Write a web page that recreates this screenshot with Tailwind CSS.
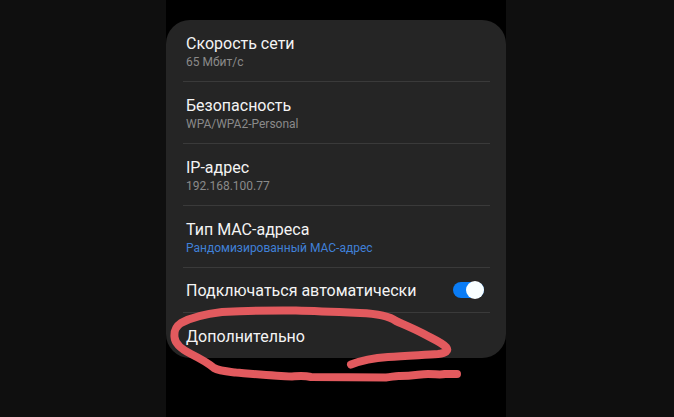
<!DOCTYPE html>
<html lang="ru">
<head>
    <meta charset="UTF-8">
    <meta name="viewport" content="width=device-width, initial-scale=1.0">
    <title>Настройки сети</title>
    <script src="https://cdn.jsdelivr.net/npm/@tailwindcss/browser@4"></script>
</head>
<body class="min-h-screen bg-[#0f0f0f] pr-0.5 font-[Roboto,sans-serif] text-[#f4f4f4]">
    <main class="mx-auto min-h-screen w-full max-w-[340px] bg-black pt-5">
        <div class="relative rounded-[24px] bg-[#252525] pl-[17px] pr-4">
            <dl>
                <div class="h-[62px] border-b border-[#3a3a3a] px-[3px] pt-3">
                    <dt class="text-base leading-6">Скорость сети</dt>
                    <dd class="text-xs leading-3 text-[#8a8a8a]">65 Мбит/с</dd>
                </div>
                <div class="h-[62px] border-b border-[#3a3a3a] px-[3px] pt-3">
                    <dt class="text-base leading-6">Безопасность</dt>
                    <dd class="text-xs leading-3 text-[#8a8a8a]">WPA/WPA2-Personal</dd>
                </div>
                <div class="h-[62px] border-b border-[#3a3a3a] px-[3px] pt-3">
                    <dt class="text-base leading-6">IP-адрес</dt>
                    <dd class="text-xs leading-3 text-[#8a8a8a]">192.168.100.77</dd>
                </div>
                <div class="h-[62px] border-b border-[#3a3a3a] px-[3px] pt-3">
                    <dt class="text-base leading-6">Тип MAC-адреса</dt>
                    <dd class="text-xs leading-3 text-[#4080d8]">Рандомизированный MAC-адрес</dd>
                </div>
            </dl>

            <label for="autoConnect" class="flex h-[45px] cursor-pointer items-center justify-between border-b border-[#3a3a3a] pl-[3px] pr-1.5">
                <span class="pt-0.5 text-base leading-6">Подключаться автоматически</span>
                <input id="autoConnect" type="checkbox" checked class="flex h-4 w-[31px] cursor-pointer appearance-none items-center rounded-full bg-[#555] before:size-[18px] before:shrink-0 before:rounded-full before:bg-[#f8feff] checked:justify-end checked:bg-[#0a7cf5]">
            </label>

            <button type="button" class="block h-[45px] w-full cursor-pointer px-[3px] pt-0.5 text-left text-base leading-6">Дополнительно</button>

            <!-- Hand-drawn marker around the last row -->
            <svg class="pointer-events-none absolute -bottom-6 left-0 h-[78px] w-[340px]" viewBox="166 304 340 78" fill="none" stroke="#e25a5e" stroke-width="8" stroke-linecap="round" stroke-linejoin="round">
                <path d="M351 364.500C360 361 374 358 388 357C406 355.500 425 355 438 354C446 353 449 351 446 347C441 342 431 338 424 334C415 329 405 325 396 321C388 315 374 313.500 360 313C338 312 316 311 296 310.500C270 310 244 311 222 312C205 314 190 318 181 323C175 327 174 331 174.500 337C175 345 183 350 191 354C201 359 208 363 214 368C219 371 227 371.500 236 372.500C254 374 276 376 292 376.500C300 376 304 375.500 311 377L386 377.500C392 377 396 375.500 400 376C414 376 420 374 428 374C436 374 440 375 445 374L457 374" />
            </svg>
        </div>
    </main>
</body>
</html>
